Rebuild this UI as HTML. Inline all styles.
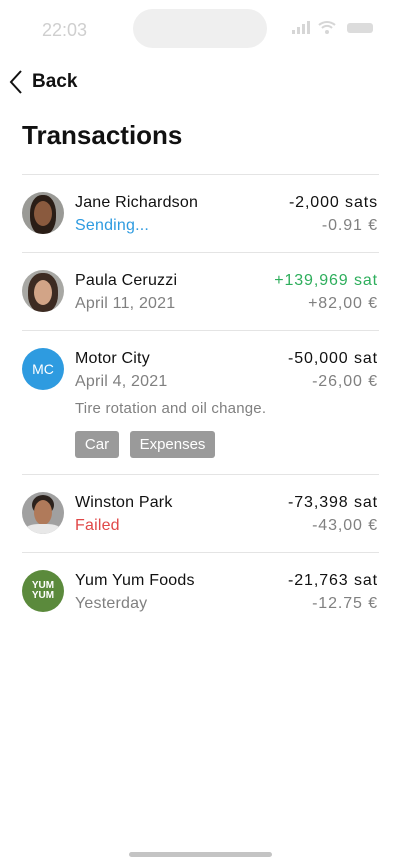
<!DOCTYPE html>
<html><head><meta charset="utf-8"><style>
*{margin:0;padding:0;box-sizing:border-box}
body{width:400px;height:866px;background:#fff;font-family:"Liberation Sans",sans-serif;position:relative;overflow:hidden;color:#111}
.abs{position:absolute}
.sep{position:absolute;left:22px;width:357px;height:1px;background:#e4e4e4}
.av{position:absolute;left:22px;width:42px;height:42px;border-radius:50%;overflow:hidden}
.av div{position:absolute}
.name{position:absolute;left:75px;font-size:16px;color:#111;letter-spacing:0.2px}
.sub{position:absolute;left:75px;font-size:16px;color:#808080;letter-spacing:0.2px}
.amt{position:absolute;right:22px;font-size:16px;text-align:right;color:#111;letter-spacing:0.9px}
.eur{position:absolute;right:22px;font-size:16px;text-align:right;color:#808080;letter-spacing:0.9px}
.tag{position:absolute;top:431px;height:27px;background:#9a9a9a;color:#fff;border-radius:3px;font-size:15px;line-height:27px;text-align:center}
</style></head><body>
<div class="abs" style="left:42px;top:20px;font-size:18px;color:#cfcfcf">22:03</div>
<div class="abs" style="left:133px;top:9px;width:134px;height:39px;border-radius:20px;background:#efefef"></div>
<svg class="abs" style="left:290px;top:20px" width="86" height="16">
<rect x="2" y="10" width="3" height="4" fill="#d6d6d6"/><rect x="7" y="7" width="3" height="7" fill="#d6d6d6"/><rect x="12" y="4" width="3" height="10" fill="#d6d6d6"/><rect x="17" y="1" width="3" height="13" fill="#d6d6d6"/>
<path d="M29 5a12 12 0 0 1 16 0M32 8a7 7 0 0 1 10 0" stroke="#d6d6d6" stroke-width="2" fill="none"/><circle cx="37" cy="12" r="2" fill="#d6d6d6"/>
<rect x="57" y="3" width="26" height="10" rx="3" fill="#dcdcdc"/></svg>
<svg class="abs" style="left:8px;top:69px" width="16" height="26"><path d="M13 2L3 13l10 11" stroke="#111" stroke-width="2" fill="none"/></svg>
<div class="abs" style="left:32px;top:71px;font-size:19px;font-weight:bold">Back</div>
<div class="abs" style="left:22px;top:120px;font-size:26px;font-weight:bold">Transactions</div>

<div class="sep" style="top:174px"></div>
<div class="av" style="top:192px;background:#9a9a96"><div style="left:8px;top:3px;width:26px;height:40px;border-radius:45%;background:#2a1d16"></div><div style="left:12px;top:9px;width:18px;height:25px;border-radius:50%;background:#8a5a3e"></div></div>
<div class="name" style="top:194px">Jane Richardson</div>
<div class="sub" style="top:217px;color:#2e9be0">Sending...</div>
<div class="amt" style="top:194px">-2,000 sats</div>
<div class="eur" style="top:217px">-0.91 €</div>

<div class="sep" style="top:252px"></div>
<div class="av" style="top:270px;background:#a8a8a4"><div style="left:6px;top:3px;width:30px;height:40px;border-radius:45%;background:#3d2b22"></div><div style="left:12px;top:10px;width:18px;height:25px;border-radius:50%;background:#d2a487"></div></div>
<div class="name" style="top:272px">Paula Ceruzzi</div>
<div class="sub" style="top:295px">April 11, 2021</div>
<div class="amt" style="top:272px;color:#2eae5c">+139,969 sat</div>
<div class="eur" style="top:295px">+82,00 €</div>

<div class="sep" style="top:330px"></div>
<div class="av" style="top:348px;background:#2e9be0;color:#fff;font-size:14px;line-height:42px;text-align:center">MC</div>
<div class="name" style="top:350px">Motor City</div>
<div class="sub" style="top:373px">April 4, 2021</div>
<div class="amt" style="top:350px">-50,000 sat</div>
<div class="eur" style="top:373px">-26,00 €</div>
<div class="sub" style="top:400px;font-size:15px">Tire rotation and oil change.</div>
<div class="tag" style="left:75px;width:44px">Car</div>
<div class="tag" style="left:130px;width:85px">Expenses</div>

<div class="sep" style="top:474px"></div>
<div class="av" style="top:492px;background:#a0a0a0"><div style="left:10px;top:3px;width:22px;height:20px;border-radius:50%;background:#2b211c"></div><div style="left:12px;top:8px;width:18px;height:25px;border-radius:50%;background:#b07a5a"></div><div style="left:3px;top:32px;width:36px;height:14px;border-radius:40%;background:#e8e8e8"></div></div>
<div class="name" style="top:494px">Winston Park</div>
<div class="sub" style="top:517px;color:#e04848">Failed</div>
<div class="amt" style="top:494px">-73,398 sat</div>
<div class="eur" style="top:517px">-43,00 €</div>

<div class="sep" style="top:552px"></div>
<div class="av" style="top:570px;background:#5b8a3c;color:#fff;font-size:10px;font-weight:bold;line-height:10px;text-align:center;padding-top:11px">YUM<br>YUM</div>
<div class="name" style="top:572px">Yum Yum Foods</div>
<div class="sub" style="top:595px">Yesterday</div>
<div class="amt" style="top:572px">-21,763 sat</div>
<div class="eur" style="top:595px">-12.75 €</div>

<div class="abs" style="left:129px;top:852px;width:143px;height:5px;border-radius:3px;background:#c4c4c4"></div>
</body></html>
